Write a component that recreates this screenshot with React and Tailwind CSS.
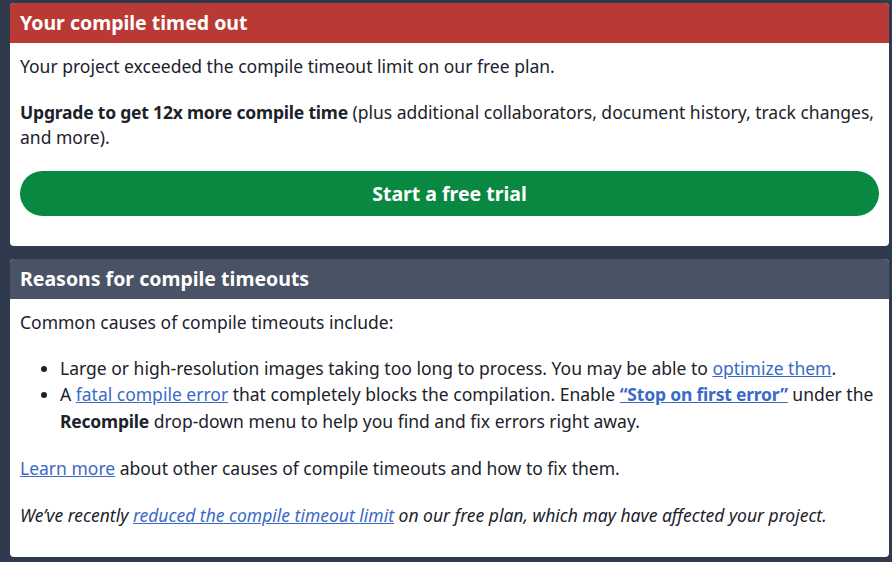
export default function App() {
  const font = { fontFamily: '"Noto Sans", "Open Sans", sans-serif' };
  return (
    <div className="w-[892px] h-[562px] overflow-hidden bg-[#2f3a4c] pt-[3px] pl-[10px] pr-[3px] text-[#1b222c]" style={font}>
      <div className="bg-white rounded-[4px] overflow-hidden">
        <div className="bg-[#b93a35] h-[40px] px-[10px] flex items-center text-white font-bold text-[19.5px]">
          Your compile timed out
        </div>
        <div className="px-[10px] pt-[11px] pb-[30px] text-[17.5px] leading-[25px]">
          <p>Your project exceeded the compile timeout limit on our free plan.</p>
          <p className="mt-[21px]">
            <b className="tracking-[-0.2px]">Upgrade to get 12x more compile time</b> (plus additional collaborators, document history, track changes, and more).
          </p>
          <button className="mt-[21px] w-full h-[45px] rounded-full bg-[#098842] text-white font-bold text-[19.5px] flex items-center justify-center">
            Start a free trial
          </button>
        </div>
      </div>

      <div className="bg-white rounded-[4px] overflow-hidden mt-[13px]">
        <div className="bg-[#495365] h-[40px] px-[10px] flex items-center text-white font-bold text-[19.5px]">
          Reasons for compile timeouts
        </div>
        <div className="px-[10px] pt-[10px] pb-[29px] text-[17.5px] leading-[26.5px]">
          <p>Common causes of compile timeouts include:</p>
          <ul className="list-disc pl-[40px] mt-[19px]">
            <li>
              Large or high-resolution images taking too long to process. You may be able to{" "}
              <a className="text-[#3a6ac7] underline">optimize them</a>.
            </li>
            <li>
              A <a className="text-[#3a6ac7] underline">fatal compile error</a> that completely blocks the compilation. Enable{" "}
              <a className="text-[#3a6ac7] underline font-bold tracking-[-0.2px]">“Stop on first error”</a> under the <b className="tracking-[-0.2px]">Recompile</b> drop-down menu to help you find and fix errors right away.
            </li>
          </ul>
          <p className="mt-[21px]">
            <a className="text-[#3a6ac7] underline">Learn more</a> about other causes of compile timeouts and how to fix them.
          </p>
          <p className="mt-[20px] italic">
            We’ve recently <a className="text-[#3a6ac7] underline">reduced the compile timeout limit</a> on our free plan, which may have affected your project.
          </p>
        </div>
      </div>
    </div>
  );
}
